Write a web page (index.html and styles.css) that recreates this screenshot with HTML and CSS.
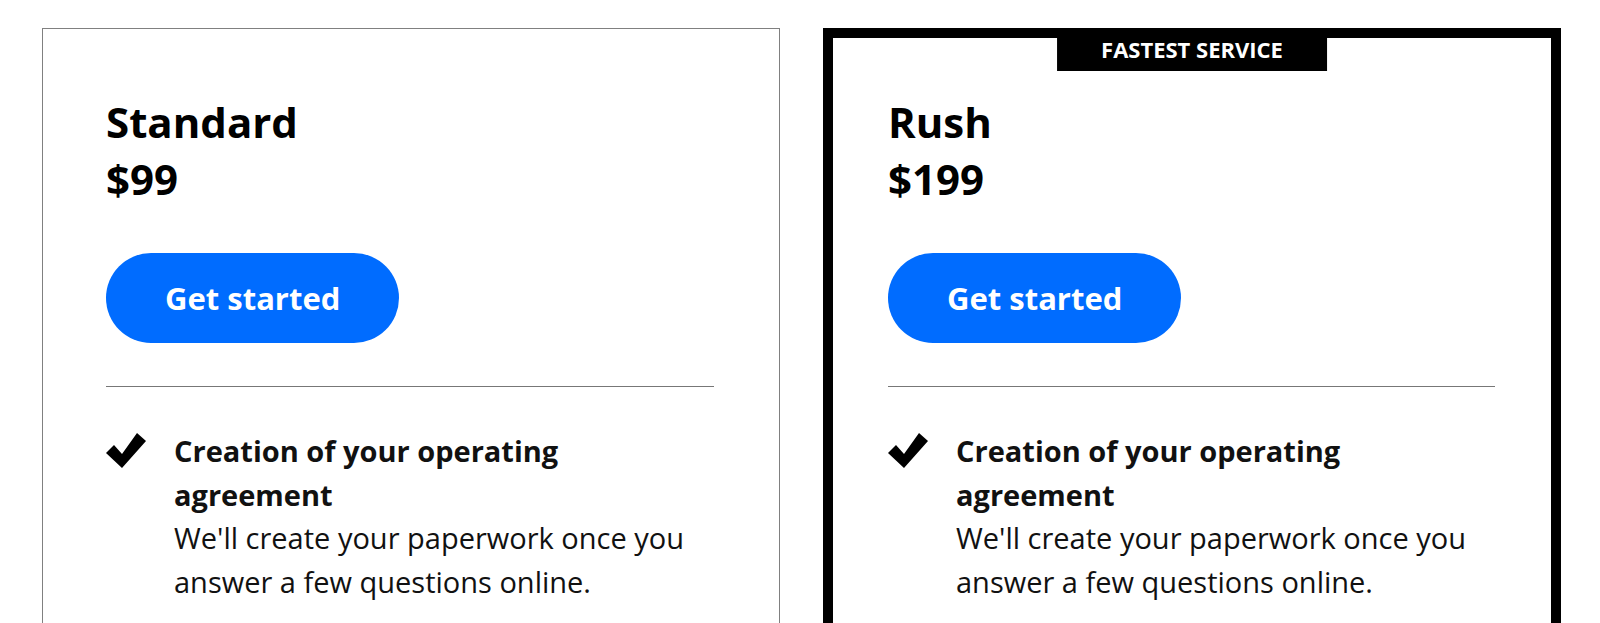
FILE: index.html
```html
<!DOCTYPE html>
<html lang="en">
<head>
    <meta charset="UTF-8">
    <meta name="viewport" content="width=device-width, initial-scale=1.0">
    <title>Pricing plans</title>
    <link rel="stylesheet" href="styles.css">
</head>
<body>
    <div class="plans">
        <div class="plan">
            <h2>Standard<br>$99</h2>
            <a class="btn" href="#">Get started</a>
            <hr>
            <ul class="features">
                <li>
                    <svg class="check" viewBox="0 0 40 35" width="40" height="35"><polygon points="0,20 8,12 16,21 31,0 40,8 16,35"/></svg>
                    <div class="feature-text">
                        <strong>Creation of your operating agreement</strong>
                        <p>We'll create your paperwork once you answer a few questions online.</p>
                    </div>
                </li>
            </ul>
        </div>
        <div class="plan featured">
            <span class="badge">FASTEST SERVICE</span>
            <h2>Rush<br>$199</h2>
            <a class="btn" href="#">Get started</a>
            <hr>
            <ul class="features">
                <li>
                    <svg class="check" viewBox="0 0 40 35" width="40" height="35"><polygon points="0,20 8,12 16,21 31,0 40,8 16,35"/></svg>
                    <div class="feature-text">
                        <strong>Creation of your operating agreement</strong>
                        <p>We'll create your paperwork once you answer a few questions online.</p>
                    </div>
                </li>
            </ul>
        </div>
    </div>
</body>
</html>
```

FILE: styles.css
```css
body {
    font-family: "Open Sans", Arial, sans-serif;
    background-color: #fff;
    color: #000;
    margin: 0;
    padding: 0;
}
.plans {
    display: flex;
    align-items: flex-start;
    gap: 43px;
    padding: 28px 39px 0 42px;
}
.plan {
    position: relative;
    box-sizing: border-box;
    width: 738px;
    border: 1px solid #808080;
    padding: 64px 65px 64px 63px;
}
.plan.featured {
    border: 10px solid #000;
    padding: 55px 56px 55px 55px;
}
.badge {
    position: absolute;
    top: 0;
    left: 50%;
    transform: translateX(-50%);
    background: #000;
    color: #fff;
    font-size: 22px;
    font-weight: 700;
    line-height: 22px;
    padding: 0 44px 11px;
    white-space: nowrap;
}
.plan h2 {
    margin: 0;
    font-size: 42px;
    font-weight: 700;
    line-height: 57px;
}
.btn {
    display: inline-block;
    margin-top: 46px;
    background-color: #006cff;
    color: #fff;
    font-size: 31px;
    font-weight: 700;
    line-height: 90px;
    padding: 0 59px;
    border-radius: 45px;
    text-decoration: none;
}
.plan hr {
    margin: 43px 0 0;
    border: none;
    border-top: 1px solid #777;
}
.features {
    list-style: none;
    margin: 42px 0 0;
    padding: 0;
}
.features li {
    display: flex;
    gap: 28px;
}
.check {
    flex: none;
    margin-top: 4px;
    fill: #000;
}
.feature-text {
    max-width: 525px;
    font-size: 29px;
    line-height: 43.5px;
    color: #111;
}
.feature-text strong {
    display: block;
    font-weight: 700;
}
.feature-text p {
    margin: 0;
}
```
